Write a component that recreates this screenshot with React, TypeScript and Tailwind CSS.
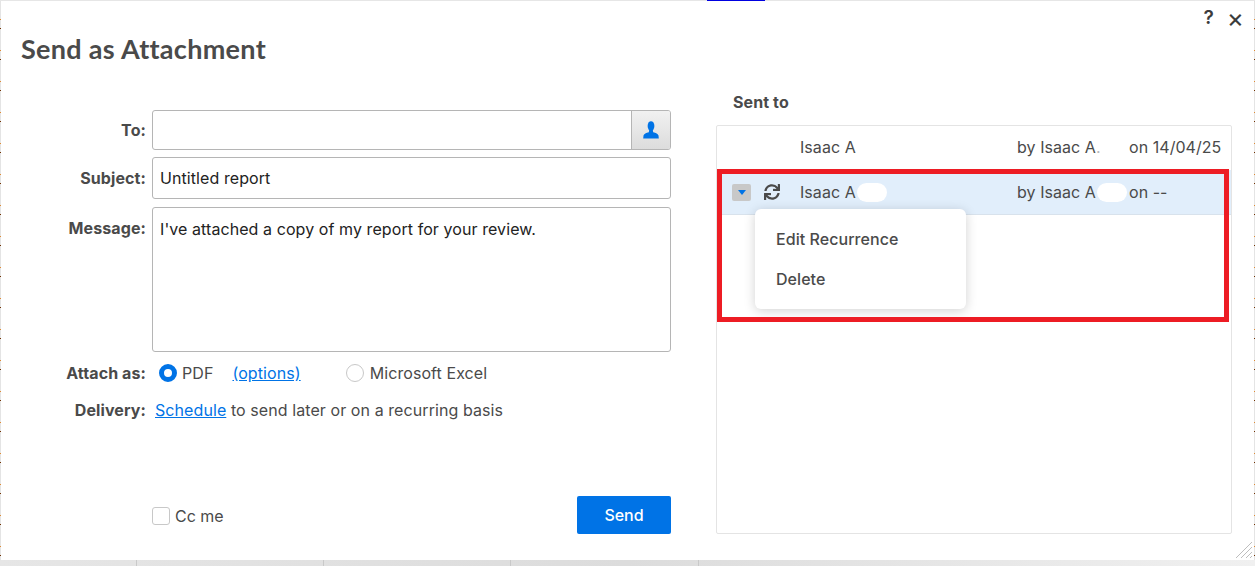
import { FaSync } from "react-icons/fa";

const LABEL = "w-[125px] shrink-0 text-right text-[16px] font-bold tracking-[0.1px] text-[#4a4a4a]";

function PersonIcon() {
  return (
    <svg viewBox="0 0 16 18" className="mr-px h-[18px] w-4 fill-[#0073e6]">
      <ellipse cx="8" cy="5" rx="3.4" ry="4.8" />
      <path d="M6.2 9h3.6l.4 2.2c2.6.7 5 1.6 5.3 3.4l.3 2.9H.2l.3-2.9c.3-1.8 2.7-2.7 5.3-3.4z" />
    </svg>
  );
}

function Blob({ className }: { className: string }) {
  return <span className={`inline-block rounded-full bg-white ${className}`} />;
}

function SentRow({
  name,
  by,
  on,
  active,
}: {
  name: React.ReactNode;
  by: React.ReactNode;
  on: string;
  active?: boolean;
}) {
  return (
    <div className={`flex items-center text-[16px] tracking-[0.05px] text-[#4a4a4a] ${active ? "h-[45px] border-b border-[#d8e2ec] bg-[#e1eefb]" : "h-[44px] pb-[2px]"}`}>
      <div className="flex w-[83px] shrink-0 items-center pl-[15px]">
        {active ? (
          <>
            <span className="flex h-[17px] w-[19px] items-center justify-center rounded-[2px] bg-[#c8c8c8]">
              <span className="h-0 w-0 border-x-[4px] border-t-[5px] border-x-transparent border-t-[#0073e6]" />
            </span>
            <FaSync className="ml-[13px] text-[16px] text-[#4a4a4a]" />
          </>
        ) : null}
      </div>
      <div className="w-[217px] shrink-0 whitespace-nowrap">{name}</div>
      <div className="w-[112px] shrink-0 whitespace-nowrap">{by}</div>
      <div className="whitespace-nowrap">{on}</div>
    </div>
  );
}

export default function App() {
  return (
    <div className="flex h-[566px] w-[1255px] flex-col overflow-hidden bg-[repeating-linear-gradient(180deg,#e4e4e4_0,#e4e4e4_19px,#e08a30_19px,#e08a30_20px,#e4e4e4_20px,#e4e4e4_28px,#703000_28px,#703000_29px,#e4e4e4_29px,#e4e4e4_31px)] font-['Inter','Liberation_Sans',sans-serif]">
      {/* page behind the dialog, only slivers show */}
      <div className="flex h-px shrink-0 bg-[#e6e6e6]">
        <div className="ml-[707px] h-px w-[58px] bg-[#0000e0]" />
      </div>

      <div className="relative ml-px mr-px h-[559px] shrink-0 bg-white">
        <div className="flex items-center justify-end gap-[13px] pr-[10px] pt-[7px] text-[#3c3c3c]">
          <span className="text-[19px] font-semibold leading-5">?</span>
          <span className="text-[26px] font-normal leading-5">×</span>
        </div>

        <h1 className="ml-5 mt-[6px] font-['Lato','Liberation_Sans',sans-serif] text-[27px] font-bold leading-[30px] tracking-[0.3px] text-[#4a4a4a]">
          Send as Attachment
        </h1>

        <div className="mt-[5px] flex">
          {/* form */}
          <div className="ml-5 flex w-[650px] flex-col pt-[41px]">
            <div className="flex items-center gap-[6px]">
              <label className={LABEL}>To:</label>
              <div className="flex h-10 w-[519px] overflow-hidden rounded-[3px] border border-[#b5b5b5]">
                <input className="min-w-0 flex-1 px-2 outline-none" />
                <button type="button" className="flex w-[39px] items-center justify-center border-l border-[#b5b5b5] bg-gradient-to-b from-[#f1f1f1] to-[#dcdcdc]">
                  <PersonIcon />
                </button>
              </div>
            </div>

            <div className="mt-[7px] flex items-center gap-[6px]">
              <label className={LABEL}>Subject:</label>
              <input
                readOnly
                value="Untitled report"
                className="h-[42px] w-[519px] rounded-[3px] border border-[#b5b5b5] px-[7px] text-[16px] tracking-[0.08px] text-[#222] outline-none"
              />
            </div>

            <div className="mt-2 flex items-start gap-[6px]">
              <label className={`${LABEL} pt-[9px]`}>Message:</label>
              <textarea
                readOnly
                value="I've attached a copy of my report for your review."
                className="h-[145px] w-[519px] resize-none rounded-[3px] border border-[#b5b5b5] px-[7px] py-[11px] text-[16px] leading-[20px] tracking-[0.08px] text-[#222] outline-none"
              />
            </div>

            <div className="mt-[9px] flex items-center gap-[6px]">
              <label className={LABEL}>Attach as:</label>
              <div className="flex items-center pl-[7px] text-[16px] tracking-[0.08px] text-[#4a4a4a]">
                <span className="h-[18px] w-[18px] rounded-full border-[5px] border-[#0073e6] bg-white" />
                <span className="ml-[5px]">PDF</span>
                <a className="ml-[19px] text-[#0073e6] underline">(options)</a>
                <span className="ml-[45px] h-[18px] w-[18px] rounded-full border border-[#c8c8c8] bg-white" />
                <span className="ml-[6px]">Microsoft Excel</span>
              </div>
            </div>

            <div className="mt-[13px] flex items-center gap-[6px]">
              <label className={LABEL}>Delivery:</label>
              <div className="pl-[3px] text-[16px] tracking-[0.08px] text-[#4a4a4a]">
                <a className="text-[#0073e6] underline">Schedule</a> to send later or on a recurring basis
              </div>
            </div>

            <div className="mt-[74px] flex items-center justify-between pl-[131px]">
              <div className="flex items-center pt-[2px] text-[16px] text-[#4a4a4a]">
                <span className="h-[18px] w-[18px] rounded-[3px] border border-[#c8c8c8] bg-white" />
                <span className="ml-[5px]">Cc me</span>
              </div>
              <button type="button" className="h-[38px] w-[94px] rounded-[2px] bg-[#0073e6] text-[16px] font-medium text-white">
                Send
              </button>
            </div>
          </div>

          {/* sent to list */}
          <div className="ml-[45px] w-[516px]">
            <div className="pl-[17px] pt-[24px] text-[16px] font-bold leading-[18px] tracking-[0.1px] text-[#4a4a4a]">Sent to</div>
            <div className="mt-[14px] h-[409px] rounded-[2px] border border-[#e4e4e4]">
              <SentRow
                name="Isaac A"
                by={
                  <>
                    by Isaac A<span className="text-[#b8b8b8]">.</span>
                  </>
                }
                on="on 14/04/25"
              />
              <SentRow
                active
                name={
                  <>
                    Isaac A<Blob className="-mb-[4px] ml-[1px] h-[19px] w-[30px]" />
                  </>
                }
                by={
                  <>
                    by Isaac A<Blob className="-mb-[4px] ml-[1px] h-[19px] w-[30px]" />
                  </>
                }
                on="on --"
              />
            </div>
          </div>
        </div>

        {/* row menu */}
        <div className="absolute left-[754px] top-[208px] flex h-[100px] w-[211px] flex-col justify-center gap-[20px] rounded-[6px] bg-white pl-[21px] text-[16px] font-medium tracking-[0.05px] text-[#4a4a4a] shadow-[0_2px_12px_rgba(0,0,0,0.18)]">
          <div className="leading-5">Edit Recurrence</div>
          <div className="leading-5">Delete</div>
        </div>

        {/* red annotation frame */}
        <div className="pointer-events-none absolute left-[716px] top-[168px] h-[153px] w-[512px] border-[5px] border-[#ed1c24]" />

        {/* resize grip */}
        <svg viewBox="0 0 16 16" className="absolute bottom-[2px] right-[2px] h-4 w-4 stroke-[#bdbdbd]">
          <path d="M0 16 16 0M5 16 16 5M10 16l6-6M14 16l2-2" />
        </svg>
      </div>

      <div className="flex flex-1 bg-gradient-to-r from-[#e6e6e6] via-[#dcdcdc] to-[#f0f0f0]">
        <div className="w-[137px] border-r border-[#c9c9c9]" />
        <div className="w-[187px] border-r border-[#c9c9c9]" />
        <div className="w-[187px] border-r border-[#c9c9c9]" />
        <div className="w-[188px] border-r border-[#c9c9c9]" />
      </div>
    </div>
  );
}
